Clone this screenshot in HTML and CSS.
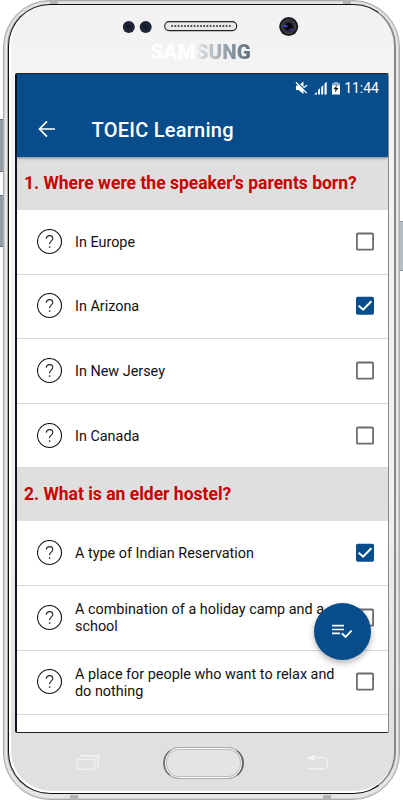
FILE: index.html
```html
<!DOCTYPE html>
<html lang="en">
<head>
<meta charset="utf-8">
<title>TOEIC Learning</title>
<link rel="stylesheet" href="styles.css">
</head>
<body>
<svg class="defs" width="0" height="0" aria-hidden="true">
  <symbol id="help" viewBox="0 0 26 26"><circle cx="12.500" cy="12.500" r="12" fill="none" stroke="#111" stroke-width="1.100"/><path d="M9.300 9.600C9.400 7.500 10.600 6.600 12.500 6.600s3.300 1.100 3.300 2.900c0 2.500-3.200 2.700-3.200 5.200v.6" fill="none" stroke="#222" stroke-width="1.100"/><circle cx="12.600" cy="18" r=".85" fill="#222"/></symbol>
  <symbol id="off" viewBox="0 0 20 20"><rect x="1.900" y="1.500" width="16.200" height="16.200" rx="1" fill="none" stroke="#6c6c6c" stroke-width="1.800"/></symbol>
  <symbol id="on" viewBox="0 0 20 20"><rect x="1" y=".8" width="18" height="18" rx="1.800" fill="#084d8b"/><path d="M3.700 9.700l4.400 4 8.300-8.500" fill="none" stroke="#fff" stroke-width="2"/></symbol>
</svg>
<div class="key left k1"></div>
<div class="key left k2"></div>
<div class="key right k3"></div>
<div class="device">
  <i class="band t1"></i><i class="band t2"></i><i class="band b1"></i><i class="band b2"></i>
  <div class="face">
    <header class="top">
      <svg class="sensors" width="182" height="24" viewBox="120 14 182 24">
        <circle cx="128.800" cy="27" r="6" fill="#1e2438"/><circle cx="145.700" cy="27" r="6" fill="#1e2438"/><circle cx="128.800" cy="27" r="2.500" fill="#171b2b"/><circle cx="145.700" cy="27" r="2.500" fill="#171b2b"/>
        <rect x="164.700" y="21.600" width="72" height="9" rx="4.500" fill="#e9e9e9" stroke="#222" stroke-width="1.100"/>
        <path d="M171.300 26H232" stroke="#111" stroke-width="1.700" stroke-dasharray="1.700 1.500"/>
        <circle cx="288.700" cy="26.600" r="9.500" fill="#19191c"/><circle cx="288.700" cy="26.600" r="7" fill="#2d2d35" stroke="#4a4a4d"/><circle cx="288.700" cy="26.600" r="3.900" fill="#08080e"/>
        <ellipse cx="285.300" cy="26" rx="2.600" ry="1.300" fill="#3f3fc4"/><ellipse cx="291.500" cy="29.800" rx="2.300" ry="1" fill="#3c32a4"/>
      </svg>
      <div class="brand">SAMSUNG</div>
    </header>
    <main class="screen">
      <div class="appbar">
        <div class="status">
          <svg width="46" height="14" viewBox="295 80 46 14" fill="#fff">
            <path d="M296 84.500h2.500l5-4v12.500l-5-4H296z"/><path d="M296.500 80.500l11 11" stroke="#084d8b" stroke-width="1.400"/><path d="M295.900 81.300l10.800 10.800M303.500 86.800l3.700-2.600" stroke="#fff" stroke-width="1.300"/>
            <path d="M314 93.500l3-2.600v2.600zM318 93.500v-4.500l2-1.800v6.300zM321.200 93.500v-7.500l2-1.800v9.300zM324.500 93.500v-10.700l2.200-2v12.700z"/>
            <path d="M332 82.500h2v-1.600h4v1.600h2v11h-8z"/><path d="M332 82.500h2v-1.600h4v1.600h2v2h-8z" fill="#8cacc9"/><path d="M337 84l-3.500 4.300h2.100l-.8 3.300 3.700-4.500h-2.200z" fill="#111"/>
          </svg>
          <span>11:44</span>
        </div>
        <div class="toolbar">
          <svg width="18" height="18" viewBox="0 0 18 18" fill="none" stroke="#fff" stroke-width="1.700"><path d="M17 9H1.800M9 1.300L1.500 9 9 16.700"/></svg>
          <h1>TOEIC Learning</h1>
        </div>
      </div>
      <div class="list">
        <h2>1. Where were the speaker's parents born?</h2>
        <div class="row"><svg class="help"><use href="#help"/></svg><p>In Europe</p><svg class="check"><use href="#off"/></svg></div>
        <div class="row"><svg class="help"><use href="#help"/></svg><p>In Arizona</p><svg class="check"><use href="#on"/></svg></div>
        <div class="row"><svg class="help"><use href="#help"/></svg><p>In New Jersey</p><svg class="check"><use href="#off"/></svg></div>
        <div class="row"><svg class="help"><use href="#help"/></svg><p>In Canada</p><svg class="check"><use href="#off"/></svg></div>
        <h2>2. What is an elder hostel?</h2>
        <div class="row"><svg class="help"><use href="#help"/></svg><p>A type of Indian Reservation</p><svg class="check"><use href="#on"/></svg></div>
        <div class="row"><svg class="help"><use href="#help"/></svg><p>A combination of a holiday camp and a<br>school</p><svg class="check"><use href="#off"/></svg></div>
        <div class="row"><svg class="help"><use href="#help"/></svg><p>A place for people who want to relax and<br>do nothing</p><svg class="check"><use href="#off"/></svg></div>
      </div>
      <button class="fab" aria-label="Submit answers">
        <svg width="22" height="16" viewBox="0 0 22 16" fill="none" stroke="#fff"><path d="M1 2.700h12M1 6.500h12M1 10.300h8" stroke-width="1.700"/><path d="M10.800 10.300l3.800 3.700 6-6.300" stroke-width="1.900"/></svg>
      </button>
    </main>
    <footer class="nav">
      <svg width="24" height="17" viewBox="76 754 24 17" fill="none" stroke="#f1f1f1"><rect x="77.300" y="759.400" width="17.400" height="9.800" stroke-width="1.300"/><path d="M80 755.800h18v11" stroke-width="1.600"/></svg>
      <div class="home"></div>
      <svg width="24" height="17" viewBox="305 755 24 17"><path d="M306 759l9-3.400v6.400z" fill="#f4f4f4"/><path d="M314 758.600h8.300a5.600 5.600 0 0 1 0 11.200H308" fill="none" stroke="#f1f1f1" stroke-width="1.400"/></svg>
    </footer>
  </div>
</div>
</body>
</html>
```
FILE: styles.css
```css
* { box-sizing: border-box; }
body { margin: 0; width: 403px; height: 800px; overflow: hidden; position: relative; background: #fff; font-family: Roboto, sans-serif; color: #111; }
.defs { position: absolute; }
.key { position: absolute; background: #919ca5; border: 1px solid #65717b; }
.left { left: -2px; width: 7px; border-radius: 2px; }
.right { right: -2px; width: 7px; border-radius: 2px; background: #b4bec6; border-color: #8e989f; }
.k1 { top: 119px; height: 53px; }
.k2 { top: 195px; height: 52px; }
.k3 { top: 221px; height: 50px; }
.device { position: relative; width: 397px; height: 800px; margin-left: 3px; padding: 3px 3px 5px 4px; border: 1px solid #aaa; border-radius: 47px; background: #e6e6e6; box-shadow: inset 0 0 0 1px #d0d0d0; }
.band { position: absolute; width: 8px; height: 5px; background: #b5b1ae; }
.t1 { left: 46px; top: -1px; }
.t2 { left: 339px; top: -1px; }
.b1 { left: 66px; bottom: -1px; }
.b2 { left: 319px; bottom: -1px; }
.face { position: relative; height: 790px; border: 1px solid #111; border-right: 2px solid #888; border-radius: 42px; background: linear-gradient(#f2f2f2 0, #f4f4f4 90px, #f0f0f0 500px, #e0e0e0 730px, #e0e0e0); box-shadow: inset 1px -1px 0 1px #fff, -1px 0 0 #aaa; display: flex; flex-direction: column; }
.top { height: 68px; flex: none; }
.sensors { display: block; margin: 9px 0 0 111px; }
.brand { margin: 1px 0 0 141.500px; width: 103px; font: 900 20.500px/26px Roboto, sans-serif; letter-spacing: .1px; color: transparent; background: linear-gradient(90deg, #fff 42%, #cfd5da 50%, #536475 100%); -webkit-background-clip: text; background-clip: text; }
.screen { position: relative; flex: none; margin-left: 6px; width: 374px; height: 660px; border: 1px solid #222; border-left: 2px solid #0b1722; border-right: 1px solid #888; border-radius: 2px; background: #fff; overflow: hidden; }
.appbar { position: relative; height: 83px; background: #084d8b; color: #fff; box-shadow: 0 1px 3px rgba(0,0,0,.45); }
.status { height: 27px; padding-right: 9px; display: flex; justify-content: flex-end; align-items: center; gap: 3px; font-size: 14px; }
.toolbar { height: 56px; display: flex; align-items: center; padding-left: 20.500px; gap: 36px; }
h1 { margin: 1px 0 0; font-size: 20px; font-weight: 500; letter-spacing: .25px; }
h2 { margin: 0; height: 53px; padding-left: 7px; background: #dfdfdf; color: #c90000; font-size: 17.500px; font-weight: 700; line-height: 53px; white-space: nowrap; }
.row { height: 64.600px; padding: 0 13px 0 20px; border-bottom: 1px solid #d9d9d9; display: flex; align-items: center; }
.help { width: 26px; height: 26px; flex: none; }
.check { width: 20px; height: 20px; flex: none; }
p { margin: 1px 0 0 12px; flex: 1; font-size: 14.400px; line-height: 17px; white-space: nowrap; }
.fab { position: absolute; left: 296.500px; top: 528.500px; width: 57.500px; height: 57.500px; padding: 0; border: 0; border-radius: 50%; background: #084d8b; box-shadow: 0 3px 6px rgba(0,0,0,.3); display: grid; place-items: center; }
.nav { flex: 1; display: flex; align-items: center; justify-content: space-between; padding: 0 65px 1px 67px; }
.home { width: 81px; height: 32px; margin-left: 1px; border: 1px solid #aaa; border-left: 2px solid #777; border-right: 2px solid #666; border-radius: 16px; background: #e4e4e4; box-shadow: inset 0 0 0 1px #fff, inset 0 0 0 2px #bbb; }
```
